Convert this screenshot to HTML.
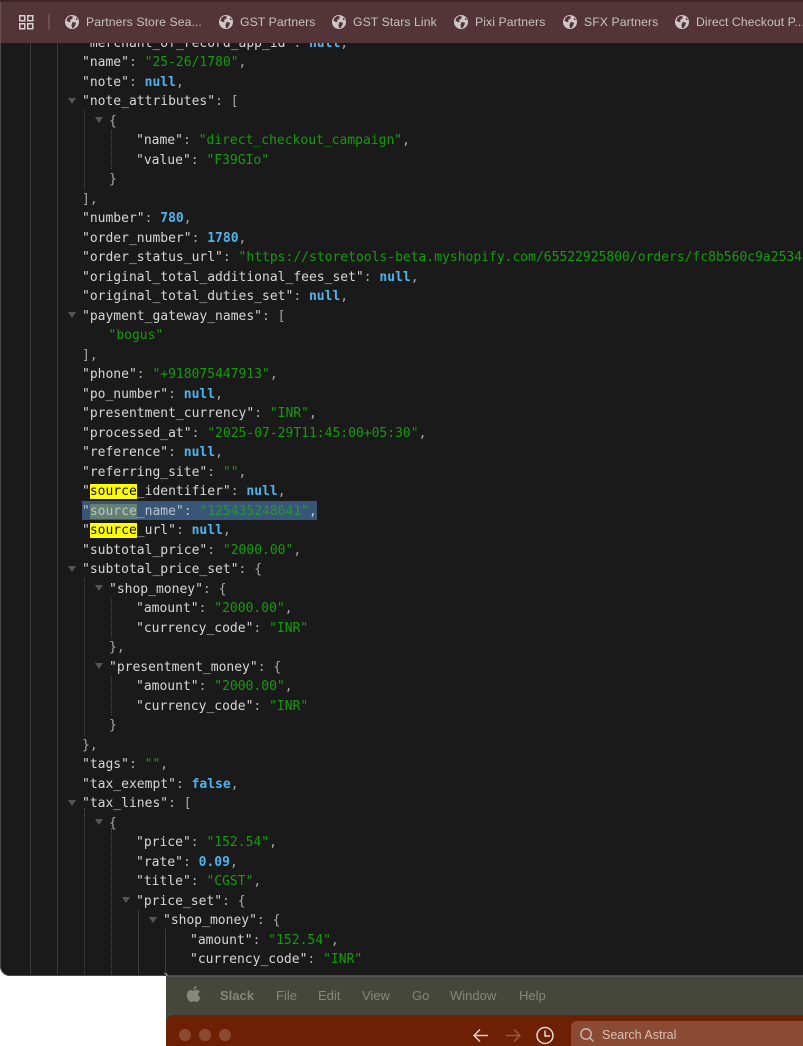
<!DOCTYPE html>
<html><head><meta charset="utf-8">
<style>
html,body{margin:0;padding:0;background:#fff}
#r{position:relative;width:803px;height:1046px;overflow:hidden;background:#fff}
#w{position:absolute;left:0;top:0;width:803px;height:976px;background:#1a1a1a;border-radius:0 0 0 10px;overflow:hidden;box-shadow:inset 1px 0 0 #4a4a4a,inset 0 -1px 0 #4a4a4a}
#t{position:absolute;left:0;top:0;width:803px;height:43px;background:#533539;box-shadow:inset 0 2px 0 #3f2428,inset 1px 0 0 #6a5054}
#x{position:absolute;left:0;top:1.75px;width:803px;height:975px}
.b{position:absolute;top:14px;font:12.2px/16px "Liberation Sans",sans-serif;color:#c9c0c1;white-space:nowrap;letter-spacing:.1px}
.g{position:absolute;top:15px;width:14px;height:14px}
.l{position:absolute;font:13px/19.5px "DejaVu Sans Mono","Liberation Mono",monospace;color:#d6d6d6;white-space:pre;height:19.5px}
.s{color:#149c0c}.n{color:#4db4ee;font-weight:bold}.p{color:#a8a8a8}
.v{position:absolute;width:1px;background:#3c3c3c}
.d{position:absolute;width:0;border-left:1px dotted #4e4e4e}
.a{position:absolute;width:0;height:0;border-left:4px solid transparent;border-right:4px solid transparent;border-top:6px solid #555}
mark{background:#ff0;color:#111}
.m{position:absolute;top:988px;font:13px/16px "Liberation Sans",sans-serif;color:#86877b;white-space:nowrap}
</style></head><body><div id="r">
<div id="w">
<div class="v" style="left:30px;top:43px;height:933px"></div>
<div class="v" style="left:57px;top:43px;height:933px"></div>
<div class="d" style="left:84px;top:808px;height:168px"></div>
<div class="d" style="left:111px;top:828px;height:148px"></div>
<div class="v" style="left:138px;top:910px;height:66px"></div>
<div class="v" style="left:165px;top:929px;height:47px"></div>
<div class="d" style="left:84px;top:110px;height:79px"></div>
<div class="d" style="left:111px;top:130px;height:39px"></div>
<div class="d" style="left:84px;top:578px;height:157px"></div>
<div class="d" style="left:111px;top:598px;height:39px"></div>
<div class="d" style="left:111px;top:676px;height:39px"></div>
<div class="a" style="left:68px;top:98px"></div>
<div class="a" style="left:95px;top:117px"></div>
<div class="a" style="left:68px;top:312px"></div>
<div class="a" style="left:68px;top:566px"></div>
<div class="a" style="left:95px;top:585px"></div>
<div class="a" style="left:95px;top:663px"></div>
<div class="a" style="left:68px;top:800px"></div>
<div class="a" style="left:95px;top:819px"></div>
<div class="a" style="left:122px;top:897px"></div>
<div class="a" style="left:149px;top:917px"></div>
<div style="position:absolute;left:82px;top:500.5px;width:235px;height:19.5px;background:#395679"></div>

<div id="x">
<div class="l" style="left:82px;top:31.75px">"merchant_of_record_app_id"<span class="p">: </span><span class="n">null</span><span class="p">,</span></div>
<div class="l" style="left:82px;top:51.25px">"name"<span class="p">: </span><span class="s">"25-26/1780"</span><span class="p">,</span></div>
<div class="l" style="left:82px;top:70.75px">"note"<span class="p">: </span><span class="n">null</span><span class="p">,</span></div>
<div class="l" style="left:82px;top:90.25px">"note_attributes"<span class="p">: [</span></div>
<div class="l p" style="left:109px;top:109.75px">{</div>
<div class="l" style="left:136px;top:129.25px">"name"<span class="p">: </span><span class="s">"direct_checkout_campaign"</span><span class="p">,</span></div>
<div class="l" style="left:136px;top:148.75px">"value"<span class="p">: </span><span class="s">"F39GIo"</span></div>
<div class="l p" style="left:109px;top:168.25px">}</div>
<div class="l p" style="left:82px;top:187.75px">],</div>
<div class="l" style="left:82px;top:207.25px">"number"<span class="p">: </span><span class="n">780</span><span class="p">,</span></div>
<div class="l" style="left:82px;top:226.75px">"order_number"<span class="p">: </span><span class="n">1780</span><span class="p">,</span></div>
<div class="l" style="left:82px;top:246.25px">"order_status_url"<span class="p">: </span><span class="s">"https://storetools-beta.myshopify.com/65522925800/orders/fc8b560c9a2534</span></div>
<div class="l" style="left:82px;top:265.75px">"original_total_additional_fees_set"<span class="p">: </span><span class="n">null</span><span class="p">,</span></div>
<div class="l" style="left:82px;top:285.25px">"original_total_duties_set"<span class="p">: </span><span class="n">null</span><span class="p">,</span></div>
<div class="l" style="left:82px;top:304.75px">"payment_gateway_names"<span class="p">: [</span></div>
<div class="l s" style="left:108.5px;top:324.25px">"bogus"</div>
<div class="l p" style="left:82px;top:343.75px">],</div>
<div class="l" style="left:82px;top:363.25px">"phone"<span class="p">: </span><span class="s">"+918075447913"</span><span class="p">,</span></div>
<div class="l" style="left:82px;top:382.75px">"po_number"<span class="p">: </span><span class="n">null</span><span class="p">,</span></div>
<div class="l" style="left:82px;top:402.25px">"presentment_currency"<span class="p">: </span><span class="s">"INR"</span><span class="p">,</span></div>
<div class="l" style="left:82px;top:421.75px">"processed_at"<span class="p">: </span><span class="s">"2025-07-29T11:45:00+05:30"</span><span class="p">,</span></div>
<div class="l" style="left:82px;top:441.25px">"reference"<span class="p">: </span><span class="n">null</span><span class="p">,</span></div>
<div class="l" style="left:82px;top:460.75px">"referring_site"<span class="p">: </span><span class="s">""</span><span class="p">,</span></div>
<div class="l" style="left:82px;top:480.25px">"<mark>source</mark>_identifier"<span class="p">: </span><span class="n">null</span><span class="p">,</span></div>
<div class="l" style="left:82px;top:499.75px;color:#b9c4d0">"<span style="background:#64806f">source</span>_name"<span>: </span><span style="color:#1f9a2e">"125435248641"</span>,</div>
<div class="l" style="left:82px;top:519.25px">"<mark>source</mark>_url"<span class="p">: </span><span class="n">null</span><span class="p">,</span></div>
<div class="l" style="left:82px;top:538.75px">"subtotal_price"<span class="p">: </span><span class="s">"2000.00"</span><span class="p">,</span></div>
<div class="l" style="left:82px;top:558.25px">"subtotal_price_set"<span class="p">: {</span></div>
<div class="l" style="left:109px;top:577.75px">"shop_money"<span class="p">: {</span></div>
<div class="l" style="left:136px;top:597.25px">"amount"<span class="p">: </span><span class="s">"2000.00"</span><span class="p">,</span></div>
<div class="l" style="left:136px;top:616.75px">"currency_code"<span class="p">: </span><span class="s">"INR"</span></div>
<div class="l p" style="left:109px;top:636.25px">},</div>
<div class="l" style="left:109px;top:655.75px">"presentment_money"<span class="p">: {</span></div>
<div class="l" style="left:136px;top:675.25px">"amount"<span class="p">: </span><span class="s">"2000.00"</span><span class="p">,</span></div>
<div class="l" style="left:136px;top:694.75px">"currency_code"<span class="p">: </span><span class="s">"INR"</span></div>
<div class="l p" style="left:109px;top:714.25px">}</div>
<div class="l p" style="left:82px;top:733.75px">},</div>
<div class="l" style="left:82px;top:753.25px">"tags"<span class="p">: </span><span class="s">""</span><span class="p">,</span></div>
<div class="l" style="left:82px;top:772.75px">"tax_exempt"<span class="p">: </span><span class="n">false</span><span class="p">,</span></div>
<div class="l" style="left:82px;top:792.25px">"tax_lines"<span class="p">: [</span></div>
<div class="l p" style="left:109px;top:811.75px">{</div>
<div class="l" style="left:136px;top:831.25px">"price"<span class="p">: </span><span class="s">"152.54"</span><span class="p">,</span></div>
<div class="l" style="left:136px;top:850.75px">"rate"<span class="p">: </span><span class="n">0.09</span><span class="p">,</span></div>
<div class="l" style="left:136px;top:870.25px">"title"<span class="p">: </span><span class="s">"CGST"</span><span class="p">,</span></div>
<div class="l" style="left:136px;top:889.75px">"price_set"<span class="p">: {</span></div>
<div class="l" style="left:163px;top:909.25px">"shop_money"<span class="p">: {</span></div>
<div class="l" style="left:190px;top:928.75px">"amount"<span class="p">: </span><span class="s">"152.54"</span><span class="p">,</span></div>
<div class="l" style="left:190px;top:948.25px">"currency_code"<span class="p">: </span><span class="s">"INR"</span></div>
<div class="l p" style="left:163px;top:967.75px">}</div>
</div>

<div id="t">
<svg style="position:absolute;left:19px;top:15px" width="15" height="15"><g fill="none" stroke="#d8cfd0" stroke-width="1.5"><rect x=".75" y=".75" width="5" height="5"/><rect x="8.75" y=".75" width="5" height="5"/><rect x=".75" y="8.75" width="5" height="5"/><rect x="8.75" y="8.75" width="5" height="5"/></g></svg>
<div style="position:absolute;left:48px;top:14px;width:2px;height:16px;background:#6e5053"></div>
<svg class="g" style="left:65px" viewBox="0 0 14 14"><circle cx="7" cy="7" r="7" fill="#cdc6c7"/><path d="M5 1 8 1.500 7 4 5 5 5.500 7 3.500 7 1.500 5.500 2.500 3ZM7.500 7 11 7.500 10.500 10 8.500 13 7 13 6.500 10ZM11 2.500 13 5 11 5Z" fill="#533539"/></svg>
<div class="b" style="left:86px">Partners Store Sea...</div>
<svg class="g" style="left:219px" viewBox="0 0 14 14"><circle cx="7" cy="7" r="7" fill="#cdc6c7"/><path d="M5 1 8 1.500 7 4 5 5 5.500 7 3.500 7 1.500 5.500 2.500 3ZM7.500 7 11 7.500 10.500 10 8.500 13 7 13 6.500 10ZM11 2.500 13 5 11 5Z" fill="#533539"/></svg>
<div class="b" style="left:240px">GST Partners</div>
<svg class="g" style="left:332px" viewBox="0 0 14 14"><circle cx="7" cy="7" r="7" fill="#cdc6c7"/><path d="M5 1 8 1.500 7 4 5 5 5.500 7 3.500 7 1.500 5.500 2.500 3ZM7.500 7 11 7.500 10.500 10 8.500 13 7 13 6.500 10ZM11 2.500 13 5 11 5Z" fill="#533539"/></svg>
<div class="b" style="left:353px">GST Stars Link</div>
<svg class="g" style="left:454px" viewBox="0 0 14 14"><circle cx="7" cy="7" r="7" fill="#cdc6c7"/><path d="M5 1 8 1.500 7 4 5 5 5.500 7 3.500 7 1.500 5.500 2.500 3ZM7.500 7 11 7.500 10.500 10 8.500 13 7 13 6.500 10ZM11 2.500 13 5 11 5Z" fill="#533539"/></svg>
<div class="b" style="left:475px">Pixi Partners</div>
<svg class="g" style="left:563px" viewBox="0 0 14 14"><circle cx="7" cy="7" r="7" fill="#cdc6c7"/><path d="M5 1 8 1.500 7 4 5 5 5.500 7 3.500 7 1.500 5.500 2.500 3ZM7.500 7 11 7.500 10.500 10 8.500 13 7 13 6.500 10ZM11 2.500 13 5 11 5Z" fill="#533539"/></svg>
<div class="b" style="left:584px">SFX Partners</div>
<svg class="g" style="left:675px" viewBox="0 0 14 14"><circle cx="7" cy="7" r="7" fill="#cdc6c7"/><path d="M5 1 8 1.500 7 4 5 5 5.500 7 3.500 7 1.500 5.500 2.500 3ZM7.500 7 11 7.500 10.500 10 8.500 13 7 13 6.500 10ZM11 2.500 13 5 11 5Z" fill="#533539"/></svg>
<div class="b" style="left:696px">Direct Checkout P...</div>
</div>
</div>

<div style="position:absolute;left:166px;top:976px;width:637px;height:70px;background:#46473b;box-shadow:inset 0 1px 0 #555"></div>
<svg style="position:absolute;left:186px;top:986px" width="15" height="17" viewBox="0 0 15 17"><path d="M10.500 0C10.600 2 9 3.800 7.400 3.800 7.200 2 8.900.3 10.500 0ZM7.500 4.700C8.400 4.700 9.300 3.900 10.800 3.900 12 3.900 13.200 4.600 13.900 5.600 11.400 7 11.800 10.600 14.400 11.600 13.800 13.300 12.300 16 10.800 16 9.700 16 9.200 15.200 7.800 15.200 6.400 15.200 5.800 16 4.800 16 3 16 .8 12.400.8 9.200.8 6 2.800 4 5 4 6 4 6.800 4.700 7.500 4.700Z" fill="#87887c"/></svg>
<div class="m" style="left:220px;font-weight:bold">Slack</div>
<div class="m" style="left:276px">File</div>
<div class="m" style="left:318px">Edit</div>
<div class="m" style="left:362px">View</div>
<div class="m" style="left:412px">Go</div>
<div class="m" style="left:450px">Window</div>
<div class="m" style="left:519px">Help</div>

<div style="position:absolute;left:166px;top:1015px;width:637px;height:31px;background:#6d2003;border-radius:8px 0 0 0"></div>
<div style="position:absolute;left:179px;top:1029px;width:12px;height:12px;border-radius:50%;background:#8b4a30"></div>
<div style="position:absolute;left:199px;top:1029px;width:12px;height:12px;border-radius:50%;background:#8b4a30"></div>
<div style="position:absolute;left:219px;top:1029px;width:12px;height:12px;border-radius:50%;background:#8b4a30"></div>
<svg style="position:absolute;left:472px;top:1026px" width="90" height="20" fill="none" stroke-width="1.500"><path d="M2 9.500H16M8 3.500 2 9.500 8 15.500" stroke="#e0cfc8"/><path d="M34 9.500H48M42 3.500 48 9.500 42 15.500" stroke="#9a5a40"/><circle cx="73" cy="9.500" r="8" stroke="#e8dcd6"/><path d="M73 4.500V10H78" stroke="#e8dcd6"/></svg>
<div style="position:absolute;left:571px;top:1021px;width:240px;height:30px;background:#8a4a33;border-radius:6px"></div>
<svg style="position:absolute;left:579px;top:1027px" width="16" height="16" fill="none" stroke="#d6c0b6" stroke-width="1.300"><circle cx="7" cy="7" r="5.200"/><path d="M11 11 14.500 14.500"/></svg>
<div style="position:absolute;left:602px;top:1027px;font:12.500px/16px 'Liberation Sans',sans-serif;color:#d6c0b6;white-space:nowrap">Search Astral</div>
</div></body></html>
